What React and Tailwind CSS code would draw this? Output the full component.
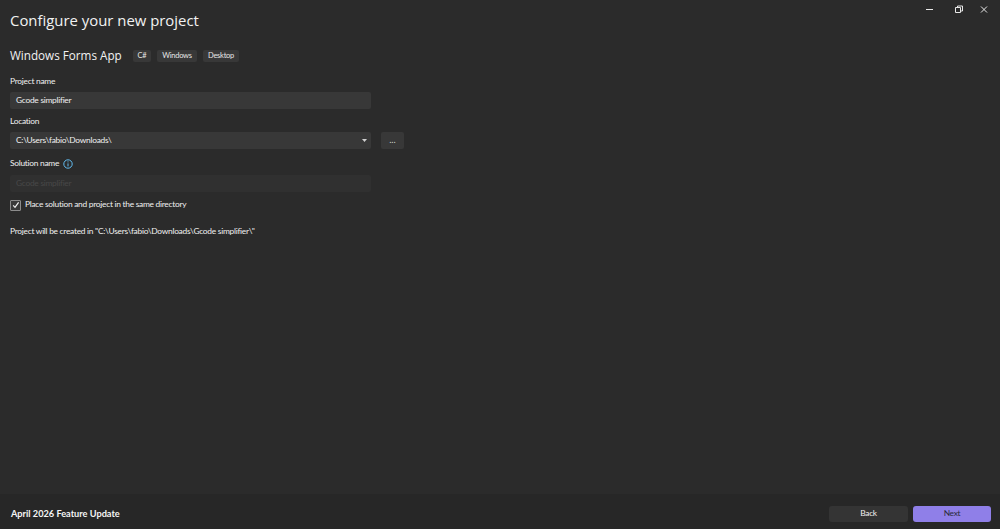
import React from 'react';

const small = "font-['Lato','Open_Sans',sans-serif] tracking-[-0.27px]";

const Tag = ({ children, className = '' }) => (
  <span className={`h-[12px] flex items-center justify-center rounded-[2px] bg-[#383838] text-[7.5px] text-[#e6e6e6] ${small} ${className}`}>{children}</span>
);

const Label = ({ children }) => (
  <div className={`h-[12px] pb-[2px] flex items-center text-[8.4px] leading-[10px] text-[#f0f0f0] ${small}`}>{children}</div>
);

const Field = ({ children, className = '' }) => (
  <div className={`w-[361px] h-[17px] pl-[6px] pr-[4px] flex items-center justify-between rounded-[2px] text-[8.4px] ${small} ${className}`}>
    {children}
  </div>
);

const App = () => {
  return (
    <div className="w-[1000px] h-[529px] flex flex-col bg-[#2b2b2b] text-white overflow-hidden font-['Open_Sans','Noto_Sans',sans-serif]">
      <main className="flex-1 pl-[10px] flex flex-col">
        <header className="h-[42px] flex justify-between">
          <h1 className="mt-[9px] h-[22px] flex items-center text-[14.9px] font-normal text-[#f2f2f2]">Configure your new project</h1>
          <div className="flex h-[20px] items-center text-[#e8e8e8]">
            <svg width="90" height="20" viewBox="0 0 90 20" fill="none" stroke="currentColor" strokeWidth="1">
              <path d="M26 9.5h7" />
              <path d="M55.5 7.5h5v5h-5z M57.5 7.5v-1.5h5v5h-2" />
              <path d="M84 6.5l6 6M90 6.5l-6 6" transform="translate(-3 0)" />
            </svg>
            <div className="w-[10px]" />
          </div>
        </header>

        <div className="mt-[6px] h-[16px] flex items-center">
          <h2 className="w-[123px] text-[11.7px] font-normal text-[#f2f2f2]">Windows Forms App</h2>
          <div className="flex gap-[6px]">
            <Tag className="w-[18px]">C#</Tag>
            <Tag className="w-[40px]">Windows</Tag>
            <Tag className="w-[36px]">Desktop</Tag>
          </div>
        </div>

        <div className="mt-[12px]"><Label>Project name</Label></div>
        <Field className="mt-[4px] bg-[#383838] text-[#f0f0f0]">Gcode simplifier</Field>

        <div className="mt-[7px]"><Label>Location</Label></div>
        <div className="mt-[4px] flex items-center gap-[10px]">
          <Field className="bg-[#383838] text-[#f0f0f0]">
            <span>C:\Users\fabio\Downloads\</span>
            <svg width="5" height="3" viewBox="0 0 5 3" className="fill-[#d0d0d0]"><path d="M0 0h5L2.5 3z" /></svg>
          </Field>
          <div className="w-[23px] h-[17px] flex items-center justify-center rounded-[2px] bg-[#383838] text-[8.5px] text-[#e6e6e6]">...</div>
        </div>

        <div className="mt-[9px] flex items-center gap-[4px] h-[12px]">
          <Label>Solution name</Label>
          <svg width="10" height="10" viewBox="0 0 10 10" fill="none" stroke="#62bdf0" className="mb-[1px]">
            <circle cx="5" cy="5" r="4.2" strokeWidth="1" />
            <path d="M5 4.4v3" strokeWidth="1" />
            <path d="M5 2.4v1" strokeWidth="1" />
          </svg>
        </div>
        <Field className="mt-[5px] bg-[#303030] text-[#484848]">Gcode simplifier</Field>

        <div className="mt-[7px] h-[12px] flex items-center gap-[4px]">
          <div className="w-[11px] h-[11px] flex items-center justify-center rounded-[1px] border border-[#8c8c8c] bg-[#3a3a3a]">
            <svg width="8" height="8" viewBox="0 0 8 8" fill="none" stroke="#f2f2f2" strokeWidth="1.2"><path d="M1.2 4.4l1.8 1.9 3.6-5" /></svg>
          </div>
          <span className={`mb-[2px] text-[8.4px] text-[#f0f0f0] ${small}`}>Place solution and project in the same directory</span>
        </div>

        <div className={`mt-[15px] h-[12px] pb-[2px] flex items-center text-[8.4px] text-[#f0f0f0] ${small}`}>Project will be created in "C:\Users\fabio\Downloads\Gcode simplifier\"</div>
      </main>

      <footer className="h-[35px] pt-[4px] pl-[11px] pr-[9px] flex items-center justify-between bg-[#272727]">
        <span className="text-[9.2px] font-bold font-['Lato',sans-serif] text-[#f5f5f5]">April 2026 Feature Update</span>
        <div className={`flex gap-[5px] ${small}`}>
          <button className="w-[79px] h-[16px] flex items-center justify-center rounded-[3px] bg-[#343434] text-[8.4px] text-[#f0f0f0]">Back</button>
          <button className="w-[78px] h-[16px] flex items-center justify-center rounded-[3px] bg-[#8f7fe8] text-[8.4px] text-[#2b2b3b]">Next</button>
        </div>
      </footer>
    </div>
  );
};

export default App;
